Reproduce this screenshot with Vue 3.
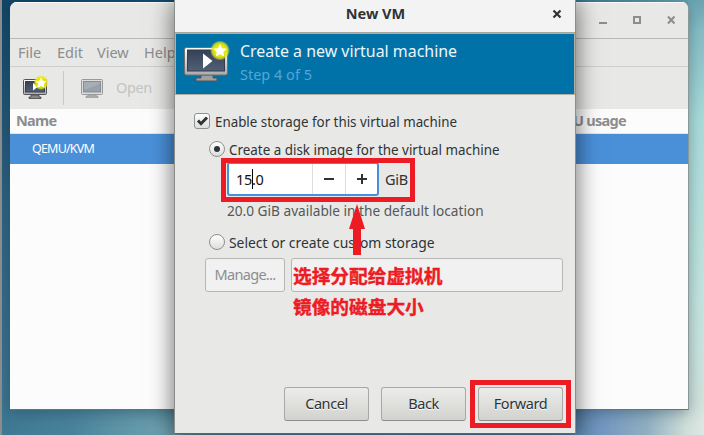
<script setup>
const menus = [
  { label: 'File', cls: 'm-file' },
  { label: 'Edit', cls: 'm-edit' },
  { label: 'View', cls: 'm-view' },
  { label: 'Help', cls: 'm-help' },
]
const actions = ['Cancel', 'Back', 'Forward']
</script>

<template>
  <div class="desktop">
    <section class="manager">
      <header class="titlebar">
        <svg width="80" height="12" viewBox="0 0 80 12">
          <g class="ctl">
            <path d="M2 10h8" />
            <path d="M37 4h6v6h-6z" />
            <path d="M71 3.500l6.500 7M77.500 3.500l-6.500 7" />
          </g>
        </svg>
      </header>
      <nav class="menubar">
        <span v-for="m in menus" :key="m.label" :class="m.cls">{{ m.label }}</span>
      </nav>
      <div class="toolbar">
        <svg class="tool-new" width="26" height="24" viewBox="0 0 26 24">
          <defs>
            <linearGradient id="bezel" x1="0" y1="0" x2="0" y2="1">
              <stop offset="0" stop-color="#fff" /><stop offset="1" stop-color="#aaa" />
            </linearGradient>
            <linearGradient id="screen" x1="0" y1="0" x2="0" y2="1">
              <stop offset="0" stop-color="#344155" /><stop offset="1" stop-color="#526077" />
            </linearGradient>
            <radialGradient id="glow">
              <stop offset=".6" stop-color="#e6e600" /><stop offset=".8" stop-color="#e8ea20" stop-opacity=".75" /><stop offset="1" stop-color="#e8ea20" stop-opacity="0" />
            </radialGradient>
          </defs>
          <path d="M9 19h8v2h2v1.500H7V21h2z" fill="#888" stroke="#444" stroke-width=".8" />
          <rect x="1.500" y="3.500" width="23" height="15" rx="1" fill="url(#bezel)" stroke="#555" />
          <rect x="3.500" y="5.500" width="19" height="10.500" fill="url(#screen)" stroke="#344050" />
          <path d="M11 7v7.500l5-3.700z" fill="#fff" />
          <circle cx="19" cy="6.500" r="7.500" fill="url(#glow)" />
          <path d="M19 1.200l1.700 3.500 3.900.5-2.900 2.600.8 3.900-3.500-1.900-3.500 1.900.8-3.900-2.900-2.600 3.900-.5z" fill="#fff" />
        </svg>
        <i class="sep"></i>
        <svg class="tool-open" width="24" height="22" viewBox="0 0 24 22">
          <path d="M8 17h8v2h2v1.500H6V19h2z" fill="#aaa" stroke="#999" stroke-width=".7" />
          <rect x="1.500" y="2.500" width="21" height="15" rx="1" fill="#ddd" stroke="#999" />
          <rect x="3.500" y="4.500" width="17" height="10.500" fill="#98a0aa" stroke="#868c94" />
          <path d="M4 5h16v2L4 13z" fill="#a6adb5" />
        </svg>
        <span class="open">Open</span>
      </div>
      <div class="columns"><b class="name">Name</b><b class="usage">CPU usage</b></div>
      <div class="row"><span>QEMU/KVM</span></div>
    </section>

    <section class="dialog">
      <header class="dialog-title">
        <b>New VM</b>
        <svg width="10" height="10" viewBox="0 0 10 10"><path d="M1.500 1.500l7 7M8.500 1.500l-7 7" stroke="#2e3436" stroke-width="2.200" /></svg>
      </header>
      <div class="banner">
        <svg width="48" height="44" viewBox="0 0 48 44">
          <path d="M18 35h12v3h4v3H13v-3h5z" fill="#a0a0a0" stroke="#555" />
          <rect x="1.500" y="7.500" width="43" height="27.500" rx="2" fill="url(#bezel)" stroke="#707070" />
          <rect x="4.500" y="10" width="37" height="21" fill="url(#screen)" stroke="#333d4c" />
          <path d="M20 13.500v15l9.500-7.500z" fill="#fff" />
          <circle cx="37" cy="10.500" r="10" fill="url(#glow)" />
          <path d="M37 4l2.100 4.200 4.600.6-3.400 3.200.9 4.600-4.200-2.300-4.200 2.300.9-4.600-3.400-3.200 4.600-.6z" fill="#fff" />
        </svg>
        <div class="headings"><span class="h1">Create a new virtual machine</span><span class="h2">Step 4 of 5</span></div>
      </div>
      <div class="body">
        <label class="opt enable">
          <span class="check"><svg width="14" height="14" viewBox="0 0 14 14"><path d="M3 6.500l3 3.200L12 3.500" fill="none" stroke="#2e3436" stroke-width="3" /></svg></span>
          <span class="txt t-enable">Enable storage for this virtual machine</span>
        </label>
        <label class="opt sub first"><span class="radio on"></span><span class="txt t-create">Create a disk image for the virtual machine</span></label>
        <div class="size">
          <div class="spin">
            <div class="value">15<i class="caret"></i>.0</div>
            <div class="step"><svg width="12" height="12" viewBox="0 0 12 12"><path d="M1 6h10" /></svg></div>
            <div class="step"><svg width="12" height="12" viewBox="0 0 12 12"><path d="M1 6h10M6 1v10" /></svg></div>
          </div>
          <span class="unit">GiB</span>
        </div>
        <div class="hint"><span class="txt t-hint">20.0 GiB available in the default location</span></div>
        <label class="opt sub second"><span class="radio"></span><span class="txt t-select">Select or create custom storage</span></label>
        <div class="path"><div class="manage"><span>Manage...</span></div><div class="entry"></div></div>
        <footer class="actions"><button v-for="a in actions" :key="a">{{ a }}</button></footer>
      </div>
    </section>

    <div class="mark mark-size"></div>
    <div class="mark mark-forward"></div>
    <svg class="arrow" width="16" height="51" viewBox="0 0 16 51"><path d="M8 0l8 25h-4v26H4V25H0z" fill="#ed1c24" /></svg>
    <div class="note"><div>选择分配给虚拟机</div><div>镜像的磁盘大小</div></div>
  </div>
</template>

<style>
body { margin: 0; overflow: hidden; }
</style>

<style scoped>
* { box-sizing: border-box; }
.desktop {
  position: relative; width: 704px; height: 435px; overflow: hidden;
  font: 14.5px/20px "Noto Sans", sans-serif; white-space: nowrap; color: #2e3436;
  border-left: 2px solid #8b8c8d;
  background:
    linear-gradient(180deg, #6ba4b1 0, #84bcc4 30px, #a8dbd9 120px, #c2e4de 300px, rgba(207,225,219,.9) 400px, rgba(220,232,226,0) 425px) 686px 0 / 18px 435px no-repeat,
    radial-gradient(ellipse 90px 50px at 160px 430px, rgba(130,175,185,.5), transparent) 0 0 / 300px 435px no-repeat,
    linear-gradient(90deg, #114466 0, #17517a 40%, #3b7891 80%, #6ba4b1) 0 0 / 100% 12px no-repeat,
    linear-gradient(180deg, #114466 0, #2d6180 200px, #3e7892 435px) 0 0 / 8px 435px no-repeat,
    linear-gradient(90deg, #3e7892 0, #5791a6 170px, #5d89b2 570px, #7397c0 600px, #8fafc0 645px, #cfded9 685px, #dfe9e4 704px);
}
.manager {
  position: absolute; left: 8px; top: 2px; width: 679px; height: 408px; overflow: hidden;
  background: #fcfcfc; border-radius: 7px 7px 0 0; border-right: 1px solid #8b9897; border-bottom: 1px solid #5d7780;
  color: #8b8e8f; box-shadow: 0 3px 14px rgba(25,55,70,.4);
}
.titlebar { height: 37px; background: #e8e8e6; border-top: 1px solid #fafafa; border-bottom: 1px solid #b9b9b5; display: flex; justify-content: flex-end; padding: 10px 11px 0 0; }
.ctl path { fill: none; stroke: #8b8e8f; stroke-width: 2; }
.menubar { height: 28px; background: #e8e8e6; border-bottom: 1px solid #cececa; display: flex; padding: 3px 0 0 8px; }
.m-file { width: 39px; } .m-edit { width: 40px; } .m-view { width: 47px; }
.toolbar { height: 42px; background: #e8e8e6; display: flex; align-items: center; padding-left: 12px; }
.tool-new { margin-bottom: 1px; }
.sep { width: 1px; height: 34px; background: #c9c9c6; margin-left: 15px; }
.tool-open { margin-left: 16px; }
.open { color: #c2c3c2; margin: 0 0 2px 12px; letter-spacing: -.4px; }
.columns { height: 25px; border-bottom: 1px solid #e4e4e2; display: flex; justify-content: space-between; padding: 1px 62px 0 6px; letter-spacing: -.7px; }
.row { height: 30px; background: #4a90d9; color: #fff; padding: 5px 22px; font-size: 12.5px; }
.row span { letter-spacing: -.8px; }
.dialog {
  position: absolute; left: 172px; top: -1px; width: 402px; height: 435px; background: #e8e8e6;
  border: solid #8b8d8b; border-width: 0 1px 1px; border-bottom-color: #4d6878;
  box-shadow: 0 3px 22px 1px rgba(0,0,0,.55);
}
.dialog-title { height: 34px; background: #f3f3f3; border-bottom: 1px solid #a6a69f; display: flex; align-items: center; justify-content: center; padding: 0 13px 4px 24px; }
.dialog-title b { flex: 1; text-align: center; margin-top: -2px; }
.banner { height: 62px; background: #0072a8; border: 1px solid #b0aea5; display: flex; padding: 6px 0 0 7px; }
.banner svg { flex: none; }
.headings { display: flex; flex-direction: column; align-items: flex-start; padding-left: 9px; color: #fff; }
.h1 { font-size: 16.500px; line-height: 21px; color: #eef5f9; transform: scaleX(.965); transform-origin: left; }
.h2 { line-height: 26px; color: #52a7d8; }
.body { padding: 16px 12px 0 19px; }
.opt { display: flex; align-items: center; height: 20px; gap: 5px; }
.txt { display: inline-block; transform-origin: left; }
.opt .txt { margin-top: -1px; }
.t-enable { transform: scaleX(.92); }
.t-create { transform: scaleX(.924); }
.t-hint { transform: scaleX(.941); }
.t-select { transform: scaleX(.957); }
.opt.sub { margin-left: 15px; gap: 4px; }
.first { margin-top: 8px; } .second { margin-top: 12px; }
.check { width: 16px; height: 16px; border: 1px solid #8f918f; border-radius: 3px; background: linear-gradient(#fff, #ddd); display: flex; }
.radio { width: 16px; height: 16px; border: 1px solid #8f918f; border-radius: 50%; background: linear-gradient(#fff, #ddd); display: grid; place-items: center; }
.on::after { content: ""; width: 6px; height: 6px; border-radius: 50%; background: #2e3436; }
.size { display: flex; align-items: center; margin: 3px 0 0 33px; gap: 6px; }
.spin { width: 152px; height: 34px; border: 2px solid #4a90d9; border-radius: 3px; background: #fff; display: flex; }
.value { flex: 1; padding: 5px 7px; color: #111; display: flex; letter-spacing: -.3px; }
.caret { width: 1px; height: 20px; background: #000; margin: 0 -1px 0 0; }
.step { width: 33px; border-left: 1px solid #deddda; display: grid; place-items: center; }
.step:last-child { width: 32px; }
.step path { stroke: #2e3436; stroke-width: 2; }
.unit { letter-spacing: -.3px; }
.hint { margin: 4px 0 0 33px; color: #555857; }
.path { display: flex; margin: 6px 0 0 11px; gap: 6px; }
.manage { width: 80px; height: 34px; border: 1px solid #b6b6b3; border-radius: 3px; background: #f1f1f1; color: #8b8e8f; text-align: center; line-height: 31px; letter-spacing: -.7px; }
.entry { flex: 1; border: 1px solid #b6b6b3; border-radius: 3px; background: #f1f1f1; }
.actions { display: flex; justify-content: flex-end; gap: 12px; margin-top: 95px; }
button { width: 85px; height: 34px; padding: 0 0 2px; border: 1px solid #a8a9a6; border-bottom-color: #8b8e8b; border-radius: 3px; background: linear-gradient(#ececea, #d2d2cf); color: #2e3436; font: inherit; letter-spacing: -.4px; text-shadow: 0 1px #fff; }
.mark { position: absolute; border: 5px solid #ed1c24; }
.mark-size { left: 219px; top: 158px; width: 194px; height: 44px; }
.mark-forward { left: 468px; top: 380px; width: 101px; height: 48px; }
.arrow { position: absolute; left: 347px; top: 204px; }
.note { position: absolute; left: 291px; top: 259px; color: #ed1c24; font: 700 18.700px/31px "Noto Sans CJK SC", sans-serif; -webkit-text-stroke: .4px #ed1c24; }
</style>
